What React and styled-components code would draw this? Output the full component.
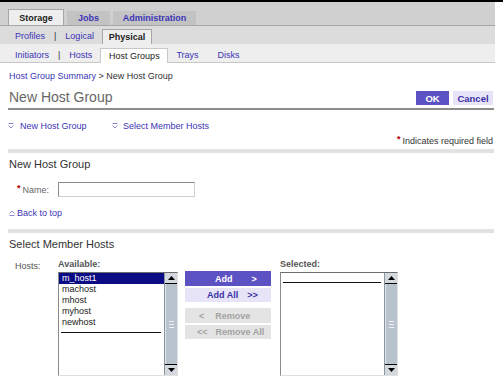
import React from "react";
import styled, { createGlobalStyle } from "styled-components";

const GlobalStyle = createGlobalStyle`
  html, body {
    margin: 0;
    padding: 0;
    background: #fff;
  }
  body {
    font-family: "Liberation Sans", Arial, sans-serif;
    font-size: 9px;
    color: #333;
  }
`;

const colors = {
  link: "#3b34b6",
  tabLine: "#a6a6a6",
  purple: "#5d52c3",
  lavender: "#e6e4f6",
};

const TopLine = styled.div`
  height: 2px;
  background: #000;
  width: 503px;
`;

const Masthead = styled.div`
  width: 495px;
`;

const PrimaryTabs = styled.div`
  height: 23px;
  background: #d0d0d0;
  border-bottom: 1px solid ${colors.tabLine};
  display: flex;
  align-items: flex-end;
  padding-left: 8px;
  gap: 3px;
`;

const PrimaryTab = styled.div`
  box-sizing: border-box;
  width: ${(p) => p.$w}px;
  height: ${(p) => (p.$active ? 16 : 14)}px;
  display: flex;
  align-items: center;
  justify-content: center;
  font-weight: bold;
  background: ${(p) => (p.$active ? "#eeeeee" : "#c3c3c3")};
  color: ${(p) => (p.$active ? "#222" : colors.link)};
  border: ${(p) => (p.$active ? `1px solid ${colors.tabLine}` : "none")};
  border-bottom: none;
`;

const SubTabs = styled.div`
  height: 18px;
  background: ${(p) => p.$bg};
  border-bottom: ${(p) => (p.$line ? "1px solid #c8c8c8" : "none")};
  display: flex;
  align-items: flex-end;
  padding-left: 15px;
  gap: 8px;
`;

const NavLink = styled.span`
  color: ${colors.link};
  line-height: 14px;
  margin-bottom: ${(p) => p.$mb || 0}px;
  margin-left: ${(p) => p.$ml || 0}px;
`;

const NavSep = styled.span`
  color: #333;
  line-height: 14px;
  margin-bottom: ${(p) => p.$mb || 0}px;
  padding: 0 1px;
`;

const SubTab = styled.div`
  box-sizing: border-box;
  width: ${(p) => p.$w}px;
  height: ${(p) => p.$h}px;
  margin-bottom: ${(p) => p.$mb || 0}px;
  background: ${(p) => p.$bg};
  border: 1px solid ${(p) => p.$border};
  border-bottom: none;
  display: flex;
  align-items: center;
  justify-content: center;
  color: #222;
  font-weight: ${(p) => (p.$bold ? "bold" : "normal")};
`;

const Content = styled.div`
  width: 486px;
  padding: 0 1px 0 8px;
`;

const Breadcrumbs = styled.div`
  margin-top: 7px;
  line-height: 12px;
  padding-left: 1px;
  color: #333;

  a {
    color: ${colors.link};
    text-decoration: none;
  }
`;

const TitleRow = styled.div`
  box-sizing: border-box;
  margin-top: 4px;
  height: 24px;
  padding-bottom: 3px;
  border-bottom: 2px solid #8c8c8c;
  display: flex;
  align-items: flex-end;
  justify-content: space-between;
`;

const PageTitle = styled.h1`
  margin: 0;
  padding-left: 1px;
  font-size: 14px;
  line-height: 16px;
  font-weight: normal;
  color: #666;
`;

const ButtonGroup = styled.div`
  display: flex;
  gap: 4px;
  margin-right: 1px;
`;

const PageButton = styled.button`
  box-sizing: border-box;
  width: ${(p) => p.$w}px;
  height: 14px;
  border: none;
  padding: 0;
  font-family: inherit;
  font-size: 9.5px;
  font-weight: bold;
  background: ${(p) => (p.$primary ? colors.purple : colors.lavender)};
  color: ${(p) => (p.$primary ? "#fff" : "#3a30a6")};
`;

const JumpLinks = styled.div`
  margin-top: 10px;
  display: flex;
  line-height: 12px;
`;

const JumpLink = styled.span`
  display: flex;
  align-items: center;
  gap: ${(p) => p.$gap}px;
  width: ${(p) => p.$w}px;
  color: ${colors.link};
`;

const Required = styled.div`
  margin-top: 3px;
  line-height: 12px;
  text-align: right;
  padding-right: 1px;
  color: #333;
`;

const Star = styled.span`
  color: #b00000;
  font-weight: bold;
  margin-right: 2px;
  position: relative;
  top: -2px;
`;

const SectionBar = styled.div`
  margin-top: ${(p) => p.$mt}px;
  height: 4px;
  background: #e2e2e2;
`;

const SectionTitle = styled.h2`
  margin: 4px 0 0;
  padding-left: 1px;
  font-size: 11px;
  line-height: 14px;
  font-weight: normal;
  color: #333;
`;

const NameRow = styled.div`
  margin-top: 11px;
  display: flex;
  align-items: center;
  padding-left: 9px;
`;

const NameLabel = styled.label`
  width: 41px;
  color: #666;
`;

const TextInput = styled.input`
  box-sizing: border-box;
  width: 137px;
  height: 15px;
  border: 1px solid #8a8a8a;
  border-right-color: #cfcfcf;
  border-bottom-color: #cfcfcf;
  padding: 0;
`;

const BackToTop = styled.div`
  margin-top: 10px;
  line-height: 12px;
  padding-left: 1px;
  display: flex;
  align-items: center;
  gap: 2px;
  color: ${colors.link};
`;

const HostsArea = styled.div`
  margin-top: 7px;
  display: flex;
  align-items: flex-start;
`;

const HostsLabel = styled.div`
  width: 50px;
  padding-left: 7px;
  box-sizing: border-box;
  line-height: 12px;
  margin-top: 2px;
  color: #555;
`;

const ListColumn = styled.div`
  width: ${(p) => p.$w}px;
  margin-left: ${(p) => p.$ml || 0}px;
`;

const ListLabel = styled.div`
  line-height: 12px;
  margin-bottom: 2px;
  font-weight: bold;
  color: #555;
`;

const ListBox = styled.div`
  box-sizing: border-box;
  height: 104px;
  display: flex;
  border-top: 1px solid #6c6c6c;
  border-left: 1px solid #8a8a8a;
  border-bottom: 1px solid #e0e0e0;
  border-right: 1px solid #e0e0e0;
  background: #fff;
`;

const Options = styled.div`
  flex: 1;
`;

const Option = styled.div`
  height: 11px;
  line-height: 11px;
  padding-left: 3px;
  background: ${(p) => (p.$selected ? "#0b0b84" : "transparent")};
  color: ${(p) => (p.$selected ? "#fff" : "#222")};
`;

const Rule = styled.div`
  margin: ${(p) => p.$top}px 3px 0 2px;
  height: 1px;
  background: #111;
`;

const Scrollbar = styled.div`
  width: 12px;
  display: flex;
  flex-direction: column;
  background: #b4bec8;
  border-left: 1px solid #8c96a0;
`;

const ScrollArrow = styled.div`
  height: 10px;
  background: #d2d8de;
  display: flex;
  align-items: center;
  justify-content: center;
  border-top: ${(p) => (p.$down ? "1px solid #000" : "none")};
  border-bottom: ${(p) => (p.$down ? "none" : "1px solid #000")};
`;

const ScrollThumb = styled.div`
  flex: 1;
  display: flex;
  align-items: center;
  justify-content: center;
  background: #b8c3cd;
  border-left: 1px solid #dde3e8;
`;

const Grip = styled.div`
  width: 5px;
  height: 5px;
  border-top: 1px solid #eef2f5;
  border-bottom: 1px solid #eef2f5;
  position: relative;

  &::after {
    content: "";
    position: absolute;
    left: 0;
    right: 0;
    top: 2px;
    height: 1px;
    background: #eef2f5;
  }
`;

const ButtonColumn = styled.div`
  width: 86px;
  margin-left: 7px;
  padding-top: 13px;
  display: flex;
  flex-direction: column;
`;

const MoveButton = styled.div`
  box-sizing: border-box;
  height: ${(p) => p.$h}px;
  margin-top: ${(p) => p.$mt}px;
  padding-left: ${(p) => p.$pl}px;
  display: flex;
  align-items: center;
  gap: ${(p) => p.$gap}px;
  font-weight: bold;
  background: ${(p) =>
    p.$variant === "primary"
      ? colors.purple
      : p.$variant === "secondary"
      ? colors.lavender
      : "#e4e4e4"};
  color: ${(p) =>
    p.$variant === "primary"
      ? "#fff"
      : p.$variant === "secondary"
      ? "#3a30a6"
      : "#a2a2a2"};
`;

const JumpIcon = ({ up }) => (
  <svg width="6" height="6" viewBox="0 0 6 6">
    {up ? (
      <>
        <polyline points="0.5,3.5 3,1 5.5,3.5" fill="none" stroke="#8a8ad0" strokeWidth="1" />
        <line x1="0.5" y1="5.5" x2="5.5" y2="5.5" stroke="#8a8ad0" strokeWidth="1" />
      </>
    ) : (
      <>
        <line x1="0.5" y1="0.5" x2="5.5" y2="0.5" stroke="#8a8ad0" strokeWidth="1" />
        <polyline points="0.5,2.5 3,5 5.5,2.5" fill="none" stroke="#8a8ad0" strokeWidth="1" />
      </>
    )}
  </svg>
);

const Arrow = ({ down }) => (
  <svg width="7" height="4" viewBox="0 0 7 4">
    <polygon points={down ? "0,0 7,0 3.5,4" : "0,4 7,4 3.5,0"} fill="#000" />
  </svg>
);

const ScrollList = ({ items, ruleTop }) => (
  <ListBox>
    <Options>
      {items.map((item, i) => (
        <Option key={item} $selected={i === 0}>
          {item}
        </Option>
      ))}
      <Rule $top={ruleTop} />
    </Options>
    <Scrollbar>
      <ScrollArrow>
        <Arrow />
      </ScrollArrow>
      <ScrollThumb>
        <Grip />
      </ScrollThumb>
      <ScrollArrow $down>
        <Arrow down />
      </ScrollArrow>
    </Scrollbar>
  </ListBox>
);

export default function App() {
  const hosts = ["m_host1", "machost", "mhost", "myhost", "newhost"];

  return (
    <>
      <GlobalStyle />
      <TopLine />
      <Masthead>
        <PrimaryTabs>
          <PrimaryTab $active $w={56}>Storage</PrimaryTab>
          <PrimaryTab $w={43}>Jobs</PrimaryTab>
          <PrimaryTab $w={83}>Administration</PrimaryTab>
        </PrimaryTabs>
        <SubTabs $bg="#dcdcdc">
          <NavLink $mb={1}>Profiles</NavLink>
          <NavSep $mb={1}>|</NavSep>
          <NavLink $mb={1}>Logical</NavLink>
          <SubTab $w={50} $h={15} $bg="#eeeeee" $border={colors.tabLine} $bold>
            Physical
          </SubTab>
        </SubTabs>
        <SubTabs $bg="#eeeeee" $line>
          <NavLink>Initiators</NavLink>
          <NavSep>|</NavSep>
          <NavLink>Hosts</NavLink>
          <SubTab $w={68} $h={15} $mb={-1} $bg="#fff" $border="#c8c8c8">
            Host Groups
          </SubTab>
          <NavLink>Trays</NavLink>
          <NavLink $ml={11}>Disks</NavLink>
        </SubTabs>
      </Masthead>

      <Content>
        <Breadcrumbs>
          <a>Host Group Summary</a> &gt; New Host Group
        </Breadcrumbs>

        <TitleRow>
          <PageTitle>New Host Group</PageTitle>
          <ButtonGroup>
            <PageButton $primary $w={33}>OK</PageButton>
            <PageButton $w={40}>Cancel</PageButton>
          </ButtonGroup>
        </TitleRow>

        <JumpLinks>
          <JumpLink $w={104} $gap={6}>
            <JumpIcon />
            New Host Group
          </JumpLink>
          <JumpLink $gap={5}>
            <JumpIcon />
            Select Member Hosts
          </JumpLink>
        </JumpLinks>

        <Required>
          <Star>*</Star>Indicates required field
        </Required>

        <SectionBar $mt={2} />
        <SectionTitle>New Host Group</SectionTitle>

        <NameRow>
          <NameLabel>
            <Star>*</Star>Name:
          </NameLabel>
          <TextInput type="text" />
        </NameRow>

        <BackToTop>
          <JumpIcon up />
          Back to top
        </BackToTop>

        <SectionBar $mt={10} />
        <SectionTitle>Select Member Hosts</SectionTitle>

        <HostsArea>
          <HostsLabel>Hosts:</HostsLabel>
          <ListColumn $w={120}>
            <ListLabel>Available:</ListLabel>
            <ScrollList items={hosts} ruleTop={4} />
          </ListColumn>
          <ButtonColumn>
            <MoveButton $variant="primary" $h={15} $mt={0} $pl={30} $gap={19}>
              <span>Add</span>
              <span>&gt;</span>
            </MoveButton>
            <MoveButton $variant="secondary" $h={14} $mt={2} $pl={22} $gap={9}>
              <span>Add All</span>
              <span>&gt;&gt;</span>
            </MoveButton>
            <MoveButton $h={15} $mt={6} $pl={14} $gap={11}>
              <span>&lt;</span>
              <span>Remove</span>
            </MoveButton>
            <MoveButton $h={14} $mt={2} $pl={12} $gap={8}>
              <span>&lt;&lt;</span>
              <span>Remove All</span>
            </MoveButton>
          </ButtonColumn>
          <ListColumn $w={118} $ml={9}>
            <ListLabel>Selected:</ListLabel>
            <ScrollList items={[]} ruleTop={9} />
          </ListColumn>
        </HostsArea>
      </Content>
    </>
  );
}
